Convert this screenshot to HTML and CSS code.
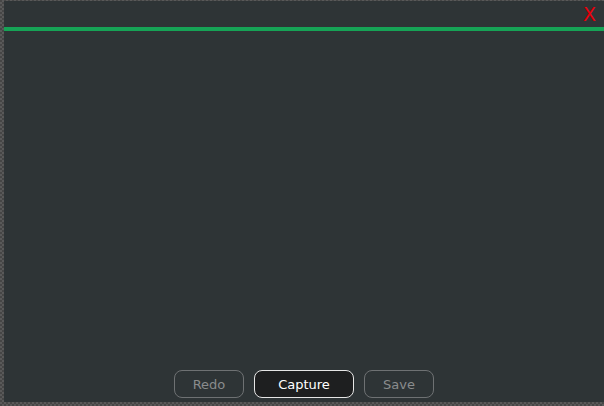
FILE: index.html
```html
<!DOCTYPE html>
<html>
<head>
<meta charset="utf-8">
<link rel="stylesheet" href="styles.css">
</head>
<body>
<div class="window">
  <div class="header"><span class="close">X</span></div>
  <div class="bar"></div>
  <div class="content"></div>
  <div class="footer">
    <button class="btn btn-off">Redo</button>
    <button class="btn btn-main">Capture</button>
    <button class="btn btn-off">Save</button>
  </div>
</div>
</body>
</html>
```
FILE: styles.css
```css
html, body {
  margin: 0;
  padding: 0;
  width: 604px;
  height: 406px;
  overflow: hidden;
}
body {
  background-color: #4c4c4c;
  background-image: repeating-conic-gradient(#595959 0 25%, #464646 0 50%);
  background-size: 4px 4px;
  font-family: "DejaVu Sans", sans-serif;
}
.window {
  margin: 1px 0 0 4px;
  width: 600px;
  height: 401px;
  background: #2e3436;
  display: flex;
  flex-direction: column;
}
.header {
  height: 26px;
  display: flex;
  justify-content: flex-end;
  align-items: flex-start;
}
.close {
  color: #e8000b;
  font-size: 19px;
  line-height: 19px;
  margin: 4px 8px 0 0;
}
.bar {
  height: 4px;
  background: #16a356;
}
.content {
  flex: 1;
}
.footer {
  display: flex;
  justify-content: center;
  gap: 10px;
  padding-bottom: 4px;
}
.btn {
  height: 28px;
  border-radius: 8px;
  font-family: "DejaVu Sans", sans-serif;
  font-size: 13px;
  padding: 0;
  box-sizing: border-box;
}
.btn-off {
  width: 70px;
  background: transparent;
  border: 1px solid #6e7173;
  color: #8a8c8d;
}
.btn-main {
  width: 100px;
  background: #1e1f20;
  border: 1px solid #e6e6e6;
  color: #ffffff;
}
```
